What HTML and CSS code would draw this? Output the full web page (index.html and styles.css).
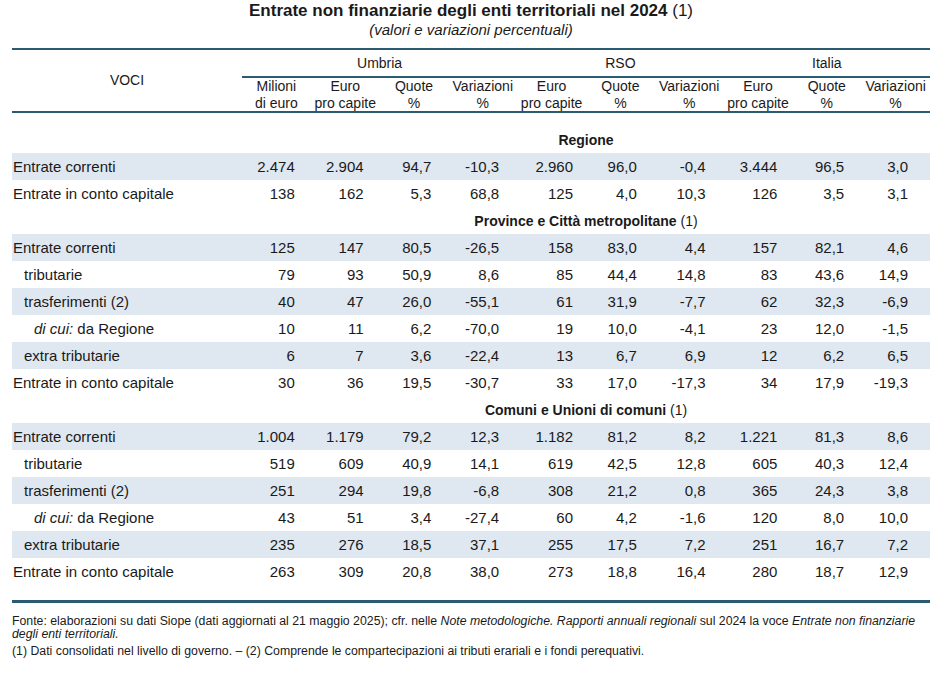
FILE: index.html
```html
<!DOCTYPE html>
<html lang="it">
<head>
<meta charset="utf-8">
<title>Entrate non finanziarie degli enti territoriali nel 2024</title>
<link rel="stylesheet" href="styles.css">
</head>
<body>
<div class="page">
  <h1 class="title">Entrate non finanziarie degli enti territoriali nel 2024 <span class="reg">(1)</span></h1>
  <p class="subtitle">(valori e variazioni percentuali)</p>
  <table class="data">
    <colgroup>
      <col class="c-label">
      <col class="c-num"><col class="c-num"><col class="c-num"><col class="c-num"><col class="c-num">
      <col class="c-num"><col class="c-num"><col class="c-num"><col class="c-num"><col class="c-num">
    </colgroup>
    <thead>
      <tr class="groups">
        <th rowspan="2" class="voci">VOCI</th>
        <th colspan="4" class="grp">Umbria</th>
        <th colspan="3" class="grp">RSO</th>
        <th colspan="3" class="grp">Italia</th>
      </tr>
      <tr class="cols">
        <th>Milioni<br>di euro</th>
        <th>Euro<br>pro capite</th>
        <th>Quote<br>%</th>
        <th>Variazioni<br>%</th>
        <th>Euro<br>pro capite</th>
        <th>Quote<br>%</th>
        <th>Variazioni<br>%</th>
        <th>Euro<br>pro capite</th>
        <th>Quote<br>%</th>
        <th>Variazioni<br>%</th>
      </tr>
    </thead>
    <tbody>
      <tr class="spacer"><td colspan="11"></td></tr>
      <tr class="section"><td></td><td colspan="10"><b>Regione</b></td></tr>
      <tr class="band"><td class="l">Entrate correnti</td><td>2.474</td><td>2.904</td><td>94,7</td><td>-10,3</td><td>2.960</td><td>96,0</td><td>-0,4</td><td>3.444</td><td>96,5</td><td>3,0</td></tr>
      <tr><td class="l">Entrate in conto capitale</td><td>138</td><td>162</td><td>5,3</td><td>68,8</td><td>125</td><td>4,0</td><td>10,3</td><td>126</td><td>3,5</td><td>3,1</td></tr>
      <tr class="section"><td></td><td colspan="10"><b>Province e Città metropolitane</b> (1)</td></tr>
      <tr class="band"><td class="l">Entrate correnti</td><td>125</td><td>147</td><td>80,5</td><td>-26,5</td><td>158</td><td>83,0</td><td>4,4</td><td>157</td><td>82,1</td><td>4,6</td></tr>
      <tr><td class="l l1">tributarie</td><td>79</td><td>93</td><td>50,9</td><td>8,6</td><td>85</td><td>44,4</td><td>14,8</td><td>83</td><td>43,6</td><td>14,9</td></tr>
      <tr class="band"><td class="l l1">trasferimenti (2)</td><td>40</td><td>47</td><td>26,0</td><td>-55,1</td><td>61</td><td>31,9</td><td>-7,7</td><td>62</td><td>32,3</td><td>-6,9</td></tr>
      <tr><td class="l l2"><i>di cui:</i> da Regione</td><td>10</td><td>11</td><td>6,2</td><td>-70,0</td><td>19</td><td>10,0</td><td>-4,1</td><td>23</td><td>12,0</td><td>-1,5</td></tr>
      <tr class="band"><td class="l l1">extra tributarie</td><td>6</td><td>7</td><td>3,6</td><td>-22,4</td><td>13</td><td>6,7</td><td>6,9</td><td>12</td><td>6,2</td><td>6,5</td></tr>
      <tr><td class="l">Entrate in conto capitale</td><td>30</td><td>36</td><td>19,5</td><td>-30,7</td><td>33</td><td>17,0</td><td>-17,3</td><td>34</td><td>17,9</td><td>-19,3</td></tr>
      <tr class="section"><td></td><td colspan="10"><b>Comuni e Unioni di comuni</b> (1)</td></tr>
      <tr class="band"><td class="l">Entrate correnti</td><td>1.004</td><td>1.179</td><td>79,2</td><td>12,3</td><td>1.182</td><td>81,2</td><td>8,2</td><td>1.221</td><td>81,3</td><td>8,6</td></tr>
      <tr><td class="l l1">tributarie</td><td>519</td><td>609</td><td>40,9</td><td>14,1</td><td>619</td><td>42,5</td><td>12,8</td><td>605</td><td>40,3</td><td>12,4</td></tr>
      <tr class="band"><td class="l l1">trasferimenti (2)</td><td>251</td><td>294</td><td>19,8</td><td>-6,8</td><td>308</td><td>21,2</td><td>0,8</td><td>365</td><td>24,3</td><td>3,8</td></tr>
      <tr><td class="l l2"><i>di cui:</i> da Regione</td><td>43</td><td>51</td><td>3,4</td><td>-27,4</td><td>60</td><td>4,2</td><td>-1,6</td><td>120</td><td>8,0</td><td>10,0</td></tr>
      <tr class="band"><td class="l l1">extra tributarie</td><td>235</td><td>276</td><td>18,5</td><td>37,1</td><td>255</td><td>17,5</td><td>7,2</td><td>251</td><td>16,7</td><td>7,2</td></tr>
      <tr><td class="l">Entrate in conto capitale</td><td>263</td><td>309</td><td>20,8</td><td>38,0</td><td>273</td><td>18,8</td><td>16,4</td><td>280</td><td>18,7</td><td>12,9</td></tr>
      <tr class="spacer end"><td colspan="11"></td></tr>
    </tbody>
  </table>
  <div class="notes">
    <p>Fonte: elaborazioni su dati Siope (dati aggiornati al 21 maggio 2025); cfr. nelle <i>Note metodologiche. Rapporti annuali regionali</i> sul 2024 la voce <i>Entrate non finanziarie<br>degli enti territoriali.</i></p>
    <p>(1) Dati consolidati nel livello di governo. – (2) Comprende le compartecipazioni ai tributi erariali e i fondi perequativi.</p>
  </div>
</div>
</body>
</html>
```

FILE: styles.css
```css
html, body {
  margin: 0;
  padding: 0;
  background: #ffffff;
}

body {
  font-family: "Liberation Sans", Arial, sans-serif;
  color: #1a1a1a;
}

.page {
  width: 918px;
  padding: 1px 0 0 12px;
}

.title {
  margin: 0;
  font-size: 17px;
  line-height: 20px;
  font-weight: bold;
  text-align: center;
}

.title .reg {
  font-weight: normal;
}

.subtitle {
  margin: 0 0 10px;
  font-size: 15px;
  line-height: 17px;
  font-style: italic;
  text-align: center;
}

.data {
  width: 918px;
  border-collapse: collapse;
  table-layout: fixed;
  border-top: 2px solid #2b5b70;
}

.c-label {
  width: 230px;
}

.c-num {
  width: 68.8px;
}

.data th {
  font-weight: normal;
  font-size: 14px;
  line-height: 16.5px;
  text-align: center;
  padding: 0;
  vertical-align: middle;
}

.groups th {
  height: 26px;
}

.groups th.grp {
  border-bottom: 2px solid #2b5b70;
}

.cols th,
.groups th.voci {
  border-bottom: 2px solid #2b5b70;
}

.cols th {
  height: 31px;
}

.data td {
  font-size: 15px;
  height: 27px;
  padding: 0;
  text-align: right;
  vertical-align: middle;
  white-space: nowrap;
}

.data td.l {
  text-align: left;
  padding-left: 1px;
}

.data td.l1 {
  padding-left: 12px;
}

.data td.l2 {
  padding-left: 22px;
}

.band td {
  background: #dfe8f1;
}

.spacer td {
  height: 13px;
}

.spacer.end td {
  height: 15px;
  border-bottom: 3px solid #2b5b70;
}

.section td {
  font-size: 14px;
  height: 27px;
  text-align: center;
}

tr:not(.section) td:nth-child(2) { padding-right: 16px; }
tr:not(.section) td:nth-child(3) { padding-right: 16px; }
tr:not(.section) td:nth-child(4) { padding-right: 17px; }
tr:not(.section) td:nth-child(5) { padding-right: 18px; }
tr:not(.section) td:nth-child(6) { padding-right: 13px; }
tr:not(.section) td:nth-child(7) { padding-right: 18px; }
tr:not(.section) td:nth-child(8) { padding-right: 18px; }
tr:not(.section) td:nth-child(9) { padding-right: 15px; }
tr:not(.section) td:nth-child(10) { padding-right: 17px; }
tr:not(.section) td:nth-child(11) { padding-right: 22px; }

.notes {
  margin-top: 12px;
  font-size: 12.3px;
  line-height: 13px;
}

.notes p {
  margin: 0 0 4px;
}
```
